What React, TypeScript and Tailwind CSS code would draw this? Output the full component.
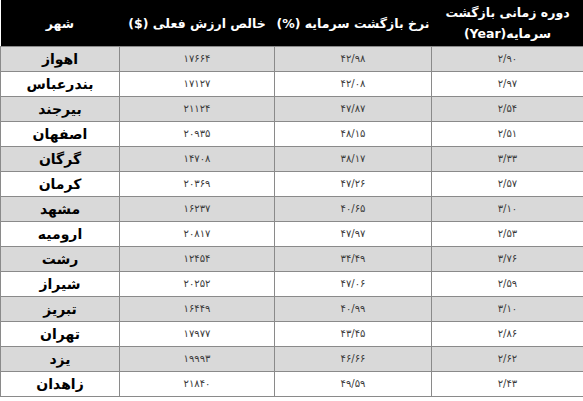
import React from 'react';

type Row = {
  city: string;
  npv: string;
  roi: string;
  payback: string;
};

const rows: Row[] = [
  { city: 'اهواز', npv: '۱۷۶۶۴', roi: '۴۲/۹۸', payback: '۲/۹۰' },
  { city: 'بندرعباس', npv: '۱۷۱۲۷', roi: '۴۲/۰۸', payback: '۲/۹۷' },
  { city: 'بیرجند', npv: '۲۱۱۲۴', roi: '۴۷/۸۷', payback: '۲/۵۴' },
  { city: 'اصفهان', npv: '۲۰۹۳۵', roi: '۴۸/۱۵', payback: '۲/۵۱' },
  { city: 'گرگان', npv: '۱۴۷۰۸', roi: '۳۸/۱۷', payback: '۳/۳۳' },
  { city: 'کرمان', npv: '۲۰۳۶۹', roi: '۴۷/۲۶', payback: '۲/۵۷' },
  { city: 'مشهد', npv: '۱۶۲۳۷', roi: '۴۰/۶۵', payback: '۳/۱۰' },
  { city: 'ارومیه', npv: '۲۰۸۱۷', roi: '۴۷/۹۷', payback: '۲/۵۳' },
  { city: 'رشت', npv: '۱۲۴۵۴', roi: '۳۴/۴۹', payback: '۳/۷۶' },
  { city: 'شیراز', npv: '۲۰۲۵۲', roi: '۴۷/۰۶', payback: '۲/۵۹' },
  { city: 'تبریز', npv: '۱۶۴۴۹', roi: '۴۰/۹۹', payback: '۳/۱۰' },
  { city: 'تهران', npv: '۱۷۹۷۷', roi: '۴۳/۴۵', payback: '۲/۸۶' },
  { city: 'یزد', npv: '۱۹۹۹۳', roi: '۴۶/۶۶', payback: '۲/۶۲' },
  { city: 'زاهدان', npv: '۲۱۸۴۰', roi: '۴۹/۵۹', payback: '۲/۴۳' },
];

export default function App() {
  return (
    <div className="w-[583px] h-[401px] bg-white font-['DejaVu_Sans',sans-serif]">
      <table className="w-[583px] border-collapse table-fixed">
        <colgroup>
          <col className="w-[119px]" />
          <col className="w-[155px]" />
          <col className="w-[157px]" />
          <col className="w-[152px]" />
        </colgroup>
        <thead>
          <tr className="h-[46px] bg-black text-white text-[12.5px] font-bold whitespace-nowrap">
            <th dir="rtl" className="text-center align-middle pt-1">شهر</th>
            <th dir="rtl" className="text-center align-middle pt-1">خالص ارزش فعلی ($)</th>
            <th dir="rtl" className="text-center align-middle pt-1">نرخ بازگشت سرمایه (%)</th>
            <th className="align-middle">
              <div className="flex flex-col items-center leading-[21px]">
                <span dir="rtl">دوره زمانی بازگشت</span>
                <div className="flex flex-row">
                  <span>(Year)</span>
                  <span dir="rtl">سرمایه</span>
                </div>
              </div>
            </th>
          </tr>
        </thead>
        <tbody>
          {rows.map((r, i) => (
            <tr key={r.city} className={`h-[25px] ${i % 2 === 0 ? 'bg-[#d9d9d9]' : 'bg-white'}`}>
              <td dir="rtl" className="border border-[#8a8a8a] text-center text-[14px] font-bold text-black leading-none">
                {r.city}
              </td>
              <td className="border border-[#8a8a8a] text-center text-[10px] text-[#3a3a3a] leading-none">{r.npv}</td>
              <td className="border border-[#8a8a8a] text-center text-[10px] text-[#3a3a3a] leading-none">{r.roi}</td>
              <td className="border border-[#8a8a8a] text-center text-[10px] text-[#3a3a3a] leading-none">{r.payback}</td>
            </tr>
          ))}
        </tbody>
      </table>
    </div>
  );
}
